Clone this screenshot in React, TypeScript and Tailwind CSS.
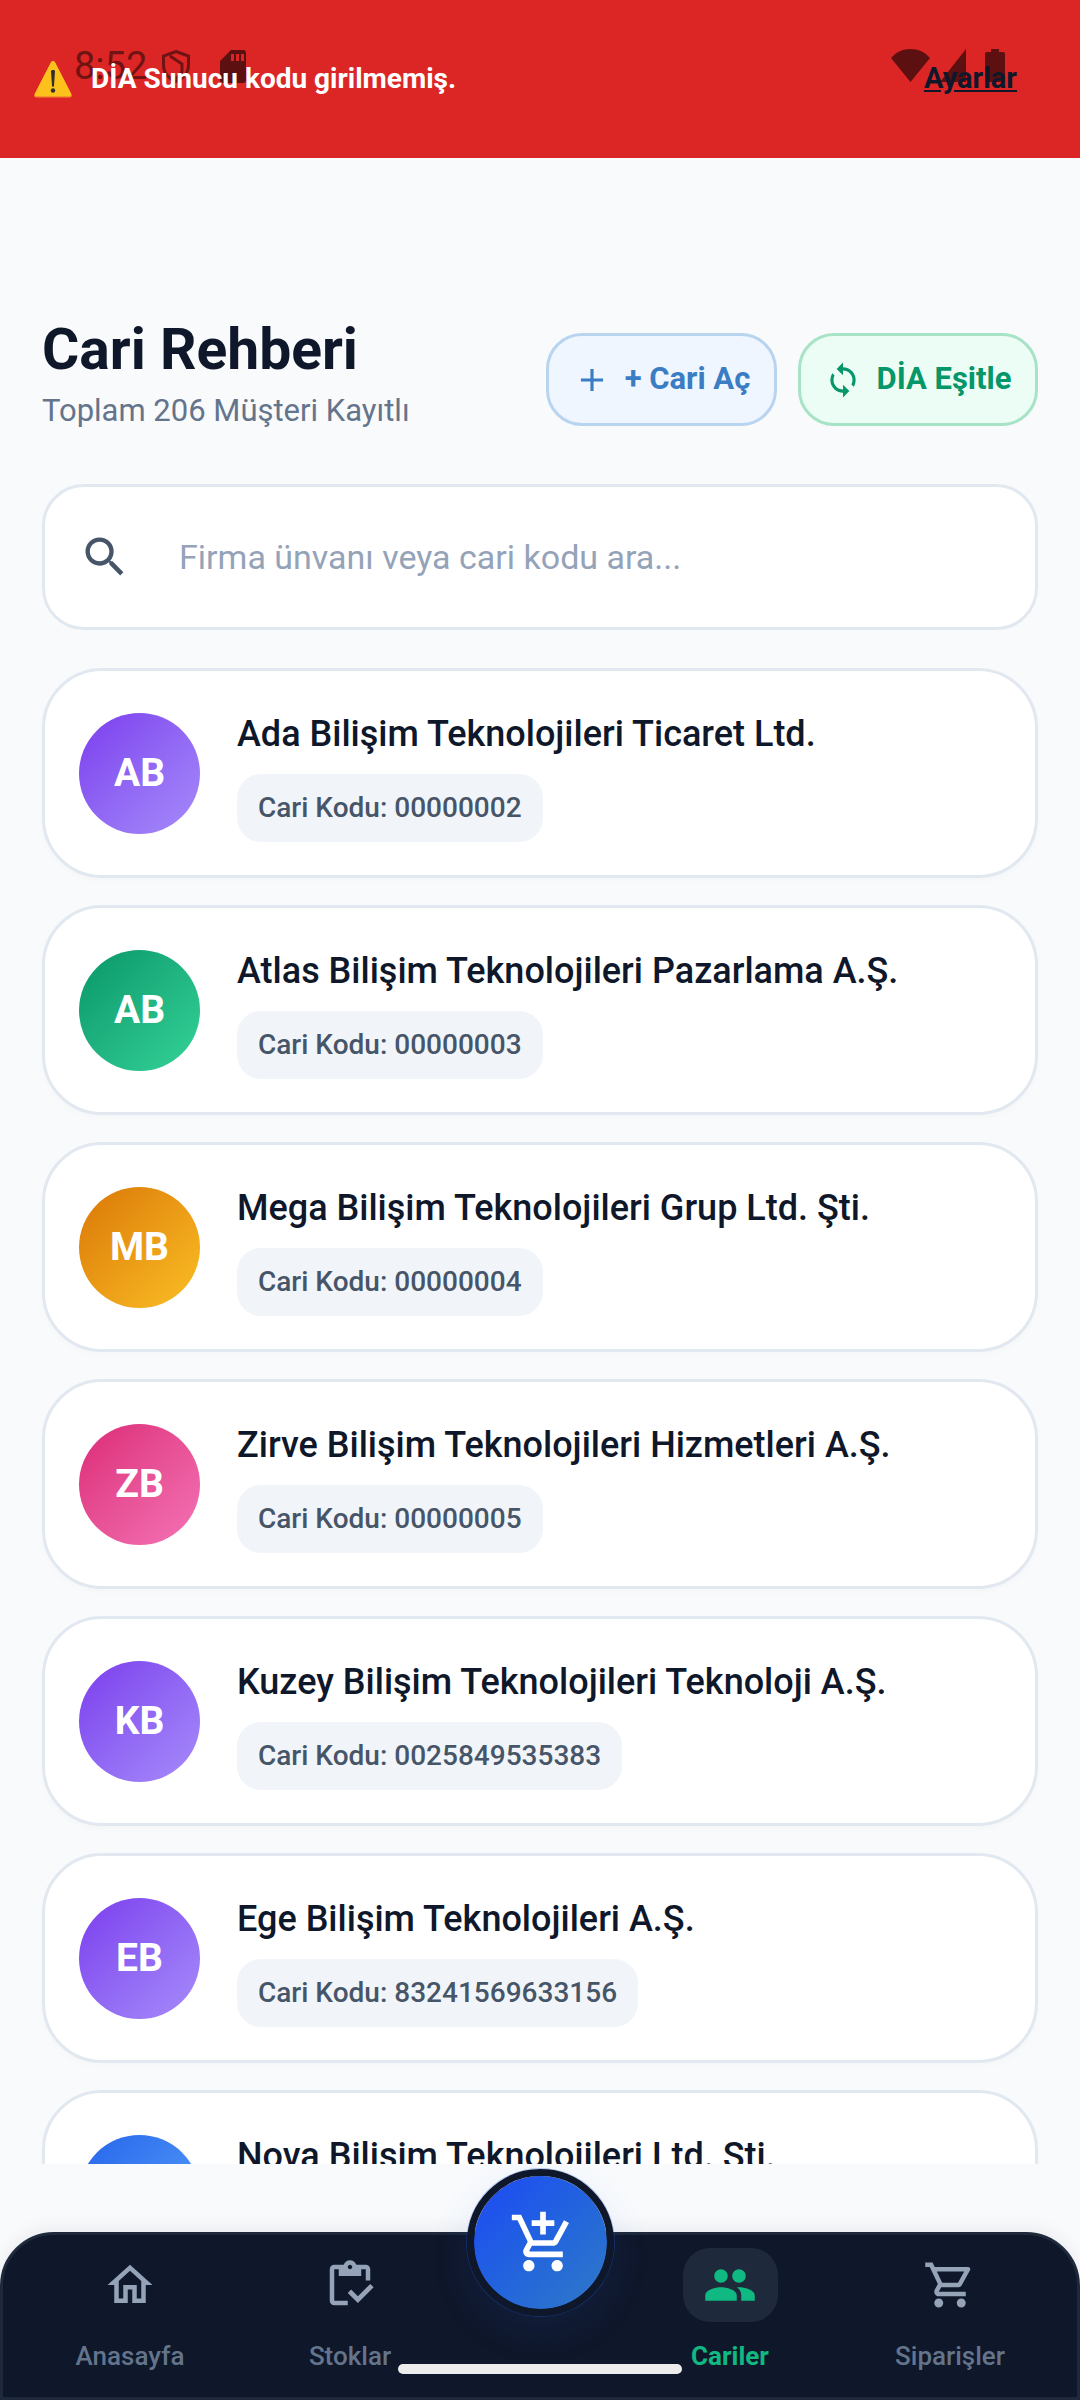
import { MdAdd, MdAddShoppingCart, MdOutlineHome, MdOutlineInventory, MdOutlineShoppingCart, MdPeople, MdSearch, MdSync } from 'react-icons/md';

const customers = [
  { initials: 'AB', name: 'Ada Bilişim Teknolojileri Ticaret Ltd.', code: '00000002', color: 'from-[#7c3aed] to-[#a78bfa]' },
  { initials: 'AB', name: 'Atlas Bilişim Teknolojileri Pazarlama A.Ş.', code: '00000003', color: 'from-[#059669] to-[#34d399]' },
  { initials: 'MB', name: 'Mega Bilişim Teknolojileri Grup Ltd. Şti.', code: '00000004', color: 'from-[#d97706] to-[#fbbf24]' },
  { initials: 'ZB', name: 'Zirve Bilişim Teknolojileri Hizmetleri A.Ş.', code: '00000005', color: 'from-[#db2777] to-[#f472b6]' },
  { initials: 'KB', name: 'Kuzey Bilişim Teknolojileri Teknoloji A.Ş.', code: '0025849535383', color: 'from-[#7c3aed] to-[#a78bfa]' },
  { initials: 'EB', name: 'Ege Bilişim Teknolojileri A.Ş.', code: '83241569633156', color: 'from-[#7c3aed] to-[#a78bfa]' },
  { initials: 'NB', name: 'Nova Bilişim Teknolojileri Ltd. Şti.', code: '00000008', color: 'from-[#2563eb] to-[#60a5fa]' },
];

const StatusBar = () => (
  <div className="absolute inset-x-0 top-0 h-[100px] text-[#5c1010]">
    <span className="absolute left-[74px] top-[44px] text-[38px] leading-[44px] opacity-85">8:52</span>
    <svg className="absolute left-[162px] top-[50px] opacity-85" width="28" height="33" viewBox="0 0 28 33" fill="none" stroke="currentColor" strokeWidth="3">
      <path d="M14 1.5 L26.5 6 V15 C26.5 23 21 29 14 31.5 C7 29 1.5 23 1.5 15 V6 Z" />
      <path d="M8 6 L20 14 V22 L14 29" />
    </svg>
    <svg className="absolute left-[220px] top-[50px]" width="26" height="33" viewBox="0 0 26 33" fill="currentColor">
      <path fillRule="evenodd" d="M11 0 H23 Q26 0 26 3 V30 Q26 33 23 33 H3 Q0 33 0 30 V11 Z M11 4 V11 H14 V4 Z M16 4 V11 H19 V4 Z M21 4 V11 H24 V4 Z" />
    </svg>
    <svg className="absolute left-[891px] top-[49px]" width="39" height="33" viewBox="0 0 39 33" fill="currentColor">
      <path d="M19.5 33 L0 9 C5 3 12 0 19.5 0 C27 0 34 3 39 9 Z" />
    </svg>
    <svg className="absolute left-[940px] top-[49px]" width="26" height="33" viewBox="0 0 26 33" fill="currentColor">
      <path d="M26 0 V33 H0 Z" />
    </svg>
    <svg className="absolute left-[985px] top-[49px]" width="20" height="33" viewBox="0 0 20 33" fill="currentColor">
      <path d="M6 0 H14 V3 H18 Q20 3 20 5 V33 H0 V5 Q0 3 2 3 H6 Z" />
    </svg>
  </div>
);

const WarningIcon = () => (
  <svg width="38" height="38" viewBox="0 0 38 38" className="shrink-0">
    <path d="M19 1 C20 1 20.8 1.8 21.4 3 L37.4 34 C38.4 36 37.4 37.5 35.4 37.5 H2.6 C0.6 37.5 -0.4 36 0.6 34 L16.6 3 C17.2 1.8 18 1 19 1 Z" fill="#f79329" />
    <path d="M19 1 C20 1 20.8 1.8 21.4 3 L37 33.5 C37.6 35 37 36 35.4 36 H2.6 C1 36 0.4 35 1 33.5 L16.6 3 C17.2 1.8 18 1 19 1 Z" fill="#fcc21b" />
    <path d="M17 11 C17 9.5 21 9.5 21 11 L20 26 C20 27 18 27 18 26 Z" fill="#2f2f2f" />
    <circle cx="19" cy="30.5" r="2.2" fill="#2f2f2f" />
  </svg>
);

const CustomerCard = ({ initials, name, code, color }: (typeof customers)[number]) => (
  <div className="flex h-[210px] shrink-0 items-center gap-[37px] rounded-[60px] border-[3px] border-[#e2e8f0] bg-white pl-[34px] shadow-[0_3px_6px_rgba(15,23,42,0.02)]">
    <div className={`flex h-[121px] w-[121px] shrink-0 items-center justify-center rounded-full bg-gradient-to-br ${color} text-[39px] font-bold text-white`}>
      {initials}
    </div>
    <div className="flex flex-col items-start gap-[15px] pt-[4px]">
      <div className="text-[36px] leading-[50px] font-medium text-[#0f172a]">{name}</div>
      <div className="flex h-[68px] items-center rounded-[24px] bg-[#f1f5f9] px-[21px] text-[28px] font-medium text-[#475569]">
        Cari Kodu: {code}
      </div>
    </div>
  </div>
);

const NavItem = ({ icon, label, active }: { icon: React.ReactNode; label: string; active?: boolean }) => (
  <div className="flex w-[220px] flex-col items-center">
    <div className={`flex h-[74px] w-[95px] items-center justify-center rounded-[27px] ${active ? 'bg-[#1e293b] text-[#10b981]' : 'text-[#94a3b8]'}`}>
      {icon}
    </div>
    <span className={`mt-[17px] text-[26px] leading-[34px] ${active ? 'font-bold text-[#10b981]' : 'font-medium text-[#64748b]'}`}>{label}</span>
  </div>
);

export default function App() {
  return (
    <div className="relative flex h-[2400px] w-[1080px] flex-col overflow-hidden bg-[#f8fafc] font-[Roboto,sans-serif]">
      <div className="relative flex h-[158px] shrink-0 items-center justify-between bg-[#dc2626] pr-[63px] pl-[34px]">
        <StatusBar />
        <div className="relative flex items-center gap-[19px]">
          <WarningIcon />
          <span className="text-[28px] font-bold text-white">DİA Sunucu kodu girilmemiş.</span>
        </div>
        <a className="relative text-[29px] font-bold text-[#0f172a] underline">Ayarlar</a>
      </div>

      <div className="flex h-[2006px] shrink-0 flex-col overflow-hidden px-[42px] pt-[175px]">
        <div className="flex h-[93px] shrink-0 items-center justify-between">
          <div className="-mt-[14px]">
            <h1 className="text-[57px] leading-[68px] font-bold text-[#0f172a]">Cari Rehberi</h1>
            <p className="mt-[9px] text-[31px] leading-[36px] text-[#64748b]">Toplam 206 Müşteri Kayıtlı</p>
          </div>
          <div className="flex gap-[21px]">
            <button className="flex h-[93px] w-[231px] items-center justify-center gap-[14px] rounded-[36px] border-[3px] border-[#b9d4ef] bg-[#eff6ff] text-[31px] font-bold text-[#3a7dc4]">
              <MdAdd size={38} />
              + Cari Aç
            </button>
            <button className="flex h-[93px] w-[240px] items-center justify-center gap-[14px] rounded-[36px] border-[3px] border-[#a7e3c6] bg-[#ecfdf5] text-[31px] font-bold text-[#059669]">
              <MdSync size={38} />
              DİA Eşitle
            </button>
          </div>
        </div>

        <div className="mt-[58px] flex h-[146px] shrink-0 items-center gap-[48px] rounded-[42px] border-[3px] border-[#e2e8f0] bg-white pl-[34px]">
          <MdSearch size={52} className="text-[#475569]" />
          <span className="text-[34px] text-[#94a3b8]">Firma ünvanı veya cari kodu ara...</span>
        </div>

        <div className="mt-[38px] flex flex-col gap-[27px]">
          {customers.map((c) => (
            <CustomerCard key={c.code} {...c} />
          ))}
        </div>
      </div>

      <div className="relative mt-[68px] flex h-[168px] shrink-0 justify-center rounded-t-[54px] border-[3px] border-[#1e293b] bg-[#0f172a] pt-[13px] shadow-[0_-6px_16px_rgba(15,23,42,0.05)]">
        <NavItem icon={<MdOutlineHome size={54} />} label="Anasayfa" />
        <NavItem icon={<MdOutlineInventory size={54} />} label="Stoklar" />
        <div className="w-[160px]" />
        <NavItem icon={<MdPeople size={54} />} label="Cariler" active />
        <NavItem icon={<MdOutlineShoppingCart size={54} />} label="Siparişler" />
      </div>

      <div className="absolute left-[467px] top-[2169px] flex h-[147px] w-[147px] items-center justify-center rounded-full border-[7px] border-[#0f172a] bg-gradient-to-br from-[#2146f5] to-[#3178c6] bg-clip-padding text-white shadow-[0_0_0_1px_rgba(37,99,235,0.3),0_14px_40px_rgba(37,99,235,0.1)]">
        <MdAddShoppingCart size={68} className="translate-x-[2px]" />
      </div>
      <div className="absolute left-[398px] top-[2364px] h-[10px] w-[284px] rounded-full bg-[#ececec]" />
    </div>
  );
}
